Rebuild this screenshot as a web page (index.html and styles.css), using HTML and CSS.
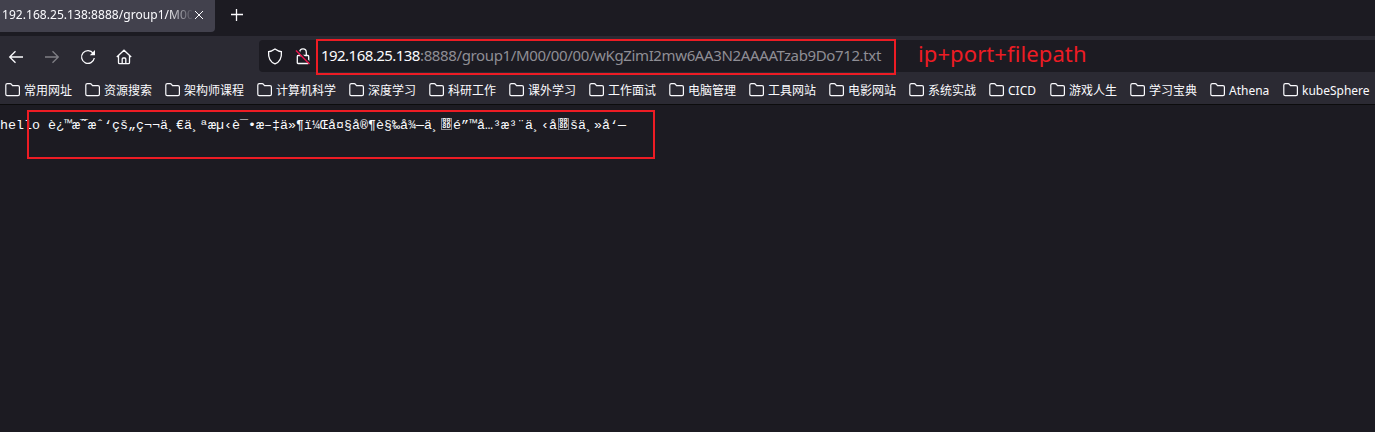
FILE: index.html
```html
<!DOCTYPE html>
<html lang="zh-CN">
<head>
<meta charset="utf-8">
<title>192.168.25.138:8888/group1</title>
<link rel="stylesheet" href="styles.css">
</head>
<body>
<svg class="defs" width="0" height="0"><symbol id="folder" viewBox="0 0 16 16"><path d="M.8 12.2V3.2Q.8 1.7 2.3 1.7H5.2Q6 1.7 6.5 2.4L7.5 3.7H13Q14.4 3.7 14.4 5.1V12.2Q14.4 13.6 13 13.6H2.2Q.8 13.6.8 12.2Z" fill="none" stroke="#fbfbfe" stroke-width="1.2"/></symbol></svg>
<header class="tabs">
  <div class="tab"><span class="tab-title">192.168.25.138:8888/group1/M00</span>
    <svg class="close" width="10" height="10" viewBox="0 0 10 10"><path d="M1 1L9 9M9 1L1 9"/></svg></div>
  <svg class="plus" width="12" height="12" viewBox="0 0 12 12"><path d="M5.5 0V12M0 5.5H12"/></svg>
</header>
<nav class="toolbar">
  <div class="buttons">
    <svg width="16" height="16" viewBox="0 0 16 16"><path d="M15 8H1.8M7.5 2.2L1.7 8L7.5 13.8"/></svg>
    <svg class="dim" width="16" height="16" viewBox="0 0 16 16"><path d="M1 8H14.2M8.5 2.2L14.3 8L8.5 13.8"/></svg>
    <svg width="16" height="16" viewBox="0 0 16 16"><path d="M13.2 4.3A6.4 6.4 0 1 0 14.3 9"/><path class="solid" d="M15 1V6.2H9.8Z"/></svg>
    <svg width="16" height="16" viewBox="0 0 16 16"><path d="M.8 8L8 1.2L15.2 8M2.5 6.8V13.5Q2.5 14.7 3.7 14.7H12.3Q13.5 14.7 13.5 13.5V6.8M6.2 14.5V10Q6.2 9 7.2 9H8.8Q9.8 9 9.8 10V14.5"/></svg>
  </div>
  <div class="address">
    <svg width="16" height="17" viewBox="0 0 16 17"><path d="M8 1Q11.5 3.6 14.4 3.6C14.8 9 13 14 8 15.8C3 14 1.2 9 1.6 3.6Q4.5 3.6 8 1Z"/></svg>
    <svg width="16" height="17" viewBox="0 0 16 17"><path d="M4.7 7V4.2A3.3 3.3 0 0 1 11.3 4.2V7M3 7.5H13Q13.7 7.5 13.7 8.5V14.7Q13.7 15.5 12.9 15.5H3.1Q2.3 15.5 2.3 14.7V8.5Q2.3 7.5 3 7.5Z"/><path class="slash-gap" d="M2.5 2.2L15.5 15.2"/><path class="slash" d="M1 2.5L14.5 16"/></svg>
    <span class="url"><span class="host">192.168.25.138</span><span class="path">:8888/group1/M00/00/00/wKgZimI2mw6AA3N2AAAATzab9Do712.txt</span></span>
  </div>
</nav>
<div class="bookmarks">
  <a class="mark"><svg><use href="#folder"/></svg>常用网址</a>
  <a class="mark"><svg><use href="#folder"/></svg>资源搜索</a>
  <a class="mark"><svg><use href="#folder"/></svg>架构师课程</a>
  <a class="mark"><svg><use href="#folder"/></svg>计算机科学</a>
  <a class="mark"><svg><use href="#folder"/></svg>深度学习</a>
  <a class="mark"><svg><use href="#folder"/></svg>科研工作</a>
  <a class="mark"><svg><use href="#folder"/></svg>课外学习</a>
  <a class="mark"><svg><use href="#folder"/></svg>工作面试</a>
  <a class="mark"><svg><use href="#folder"/></svg>电脑管理</a>
  <a class="mark"><svg><use href="#folder"/></svg>工具网站</a>
  <a class="mark"><svg><use href="#folder"/></svg>电影网站</a>
  <a class="mark"><svg><use href="#folder"/></svg>系统实战</a>
  <a class="mark cicd"><svg><use href="#folder"/></svg>CICD</a>
  <a class="mark"><svg><use href="#folder"/></svg>游戏人生</a>
  <a class="mark"><svg><use href="#folder"/></svg>学习宝典</a>
  <a class="mark athena"><svg><use href="#folder"/></svg>Athena</a>
  <a class="mark kube"><svg><use href="#folder"/></svg>kubeSphere</a>
</div>
<main class="page"><pre class="text">hello è¿™æ<span class="mod">˜</span>¯æˆ‘çš„ç¬¬ä¸€ä¸ªæµ‹è¯•æ–‡ä»¶ï¼Œå¤§å®¶è§‰å¾—ä¸<span class="hex"><b>00</b><b>8D</b></span>é”™å…³æ³¨ä¸‹å<span class="hex"><b>00</b><b>8D</b></span>šä¸»å‘—</pre></main>
<div class="frame frame-url"></div>
<div class="frame frame-text"></div>
<div class="note">ip+port+filepath</div>
</body>
</html>
```
FILE: styles.css
```css
* { box-sizing: border-box; }
body { margin: 0; height: 432px; overflow: hidden; background: #1c1b22; color: #fbfbfe; font-family: "Noto Sans", "Noto Sans CJK SC", sans-serif; position: relative; }
svg { flex: none; fill: none; stroke: #fbfbfe; stroke-width: 1.3; }
.defs { position: absolute; }
.tabs { height: 36px; display: flex; align-items: flex-start; }
.tab { width: 215px; height: 32px; padding: 0 11px 3px 2px; background: #42414d; border-radius: 0 0 4px 0; display: flex; align-items: center; }
.tab-title { width: 190px; overflow: hidden; white-space: nowrap; font-size: 12px; letter-spacing: 0.05px; -webkit-mask-image: linear-gradient(to right, #000 165px, transparent 192px); mask-image: linear-gradient(to right, #000 165px, transparent 192px); }
.close { stroke-width: 1; margin-left: 2px; }
.plus { margin: 9px 0 0 16px; }
.toolbar { height: 40px; padding-top: 4px; background: #2b2a33; display: flex; align-items: flex-start; }
.buttons { width: 259px; height: 33px; padding-left: 8px; display: flex; align-items: center; gap: 20px; }
.dim { opacity: .4; }
.solid { fill: #fbfbfe; stroke: none; }
.address { flex: 1; height: 32px; padding-left: 8px; background: #1c1b22; border-radius: 4px 0 0 4px; display: flex; align-items: center; gap: 12px; }
.slash-gap { stroke: #1c1b22; stroke-width: 1.6; }
.slash { stroke: #e8134b; stroke-width: 1.5; }
.url { margin: -2px 0 0 -2px; font-size: 15px; line-height: 30px; white-space: nowrap; display: flex; }
.host { width: 99px; letter-spacing: -0.54px; }
.path { color: #8f8e95; letter-spacing: -0.37px; }
.bookmarks { height: 29px; padding: 0 0 1px 5px; background: #2b2a33; border-bottom: 1px solid #0c0c0d; display: flex; align-items: center; font-size: 12px; line-height: 18px; white-space: nowrap; }
.mark { flex: none; width: 80px; padding-top: 2px; display: flex; align-items: center; gap: 3px; }
.mark:nth-child(3), .mark:nth-child(4) { width: 92px; }
.mark svg { width: 16px; height: 16px; margin-top: -2px; }
.mark.cicd { width: 61px; }
.mark.athena { width: 73px; }
.mark.kube { width: 92px; }
.page { padding-top: 12px; }
.text { margin: 0; height: 17px; font: 13.333px/17px "Liberation Mono", monospace; white-space: pre; font-variant-ligatures: none; }
.mod { display: inline-block; width: 0; }
.hex { display: inline-grid; grid-template-columns: 9px; width: 11px; height: 12px; margin: 1px 1px 0; border: 1px solid #8d8d92; vertical-align: top; justify-content: center; align-content: center; }
.hex b { height: 5px; font: bold 7px/5px "Liberation Mono", monospace; text-align: center; }
.frame { position: absolute; border: 2px solid #ed1c24; }
.frame-url { left: 316px; top: 39px; width: 580px; height: 36px; }
.frame-text { left: 27px; top: 110px; width: 628px; height: 49px; }
.note { position: absolute; left: 918px; top: 38px; font-size: 22px; line-height: 30px; letter-spacing: 0.1px; color: #ed1c24; white-space: nowrap; }
```
